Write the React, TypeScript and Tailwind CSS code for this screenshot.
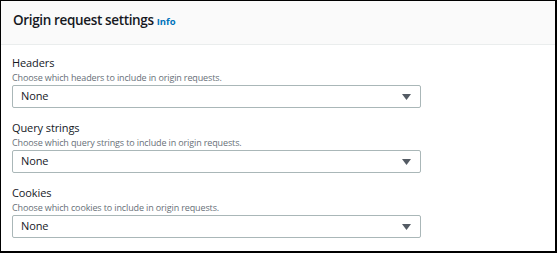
import React from "react";

const fields = [
  { label: "Headers", desc: "Choose which headers to include in origin requests." },
  { label: "Query strings", desc: "Choose which query strings to include in origin requests." },
  { label: "Cookies", desc: "Choose which cookies to include in origin requests." },
];

export default function App() {
  return (
    <div
      className="w-[557px] h-[253px] bg-white border-l border-t border-r-2 border-b-2 border-black overflow-hidden"
      style={{ fontFamily: '"Open Sans", "Noto Sans", sans-serif' }}
    >
      <div className="h-[44px] bg-[#fafafa] border-b border-[#eaeded] flex items-center pl-[12px] pb-[4px]">
        <span className="text-[13.5px] font-semibold text-[#16191f] tracking-[-0.35px]">Origin request settings</span>
        <span className="ml-[3px] mt-[3px] text-[9.5px] font-bold text-[#0073bb]">Info</span>
      </div>
      <div className="px-[11px] pt-[10px] flex flex-col gap-[12px]">
        {fields.map((f) => (
          <div key={f.label} className="flex flex-col">
            <div className="text-[11px] leading-[16px] text-[#16191f] tracking-[-0.1px]">{f.label}</div>
            <div className="text-[9px] leading-[13px] text-[#687078] tracking-[-0.13px]">{f.desc}</div>
            <div className="mt-[1px] w-[409px] h-[23px] border border-[#aab7b8] rounded-[2px] flex items-center justify-between pl-[8px] pr-[9px]">
              <span className="text-[11px] text-[#16191f] tracking-[-0.1px]">None</span>
              <svg width="9" height="6" viewBox="0 0 9 6">
                <path d="M0 0 H9 L4.5 6 Z" fill="#545b64" />
              </svg>
            </div>
          </div>
        ))}
      </div>
    </div>
  );
}
